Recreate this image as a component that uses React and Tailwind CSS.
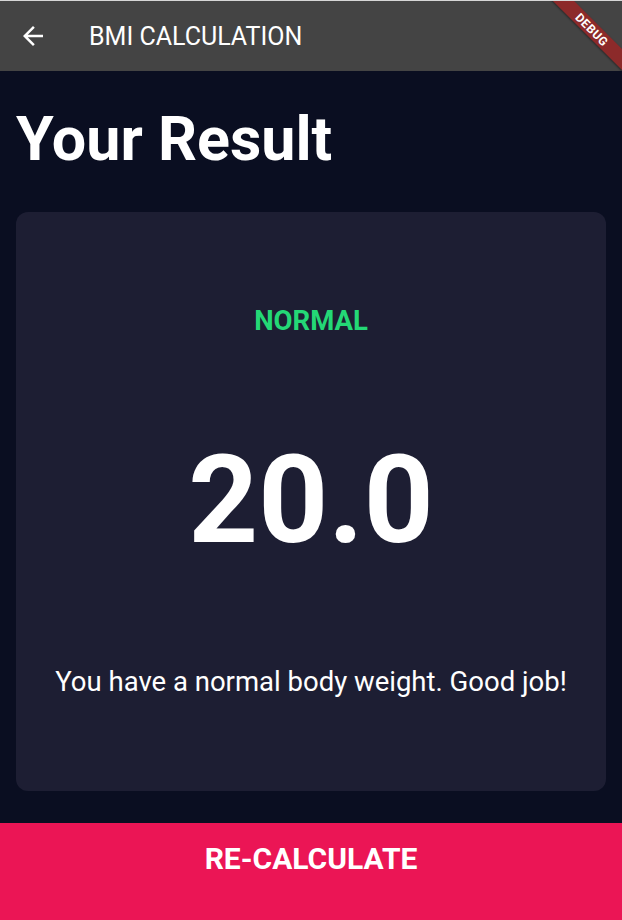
const BG = 'bg-[#0a0e21]'

function BackArrow() {
  return (
    <svg viewBox="0 0 24 24" className="w-[30px] h-[30px] fill-white">
      <path d="M20 11H7.83l5.59-5.59L12 4l-8 8 8 8 1.41-1.41L7.83 13H20v-2z" />
    </svg>
  )
}

function DebugBanner() {
  return (
    <div className="absolute left-[532px] top-[21px] w-[120px] h-[15px] rotate-45 bg-[#8c2a2a] flex items-center justify-center shadow-[0_1px_2px_rgba(0,0,0,0.4)]">
      <span className="text-white text-[12px] font-bold leading-none tracking-[0.5px]">DEBUG</span>
    </div>
  )
}

export default function App() {
  return (
    <div
      className={`w-[622px] h-[920px] flex flex-col ${BG} overflow-hidden`}
      style={{ fontFamily: 'Roboto, "Noto Sans", sans-serif' }}
    >
      <div className="h-px bg-[#d6d6d6] shrink-0" />

      <header className="relative h-[70px] shrink-0 bg-[#444444] flex items-center overflow-hidden">
        <div className="w-[70px] flex items-center pl-[18px]">
          <BackArrow />
        </div>
        <h1 className="ml-[19px] text-white text-[25px] font-normal leading-none">BMI CALCULATION</h1>
        <DebugBanner />
      </header>

      <main className="flex-1 flex flex-col min-h-0">
        <h2 className="pt-[33px] pl-[16px] text-white text-[61px] font-bold leading-[1.172]">
          Your Result
        </h2>

        <section className="mx-[16px] mt-[37px] flex-1 rounded-[12px] bg-[#1d1e33] flex flex-col items-center justify-evenly text-center">
          <p className="text-[#24d876] text-[27.5px] font-bold leading-[1.172]">NORMAL</p>
          <p className="text-white text-[122px] font-bold leading-[1.172]">20.0</p>
          <p className="text-white text-[27.5px] leading-[1.172]">You have a normal body weight. Good job!</p>
        </section>

        <button className="mt-[32px] h-[97px] shrink-0 bg-[#eb1555] flex items-center justify-center pb-[25px]">
          <span className="text-white text-[30px] font-bold leading-none">RE-CALCULATE</span>
        </button>
      </main>
    </div>
  )
}
